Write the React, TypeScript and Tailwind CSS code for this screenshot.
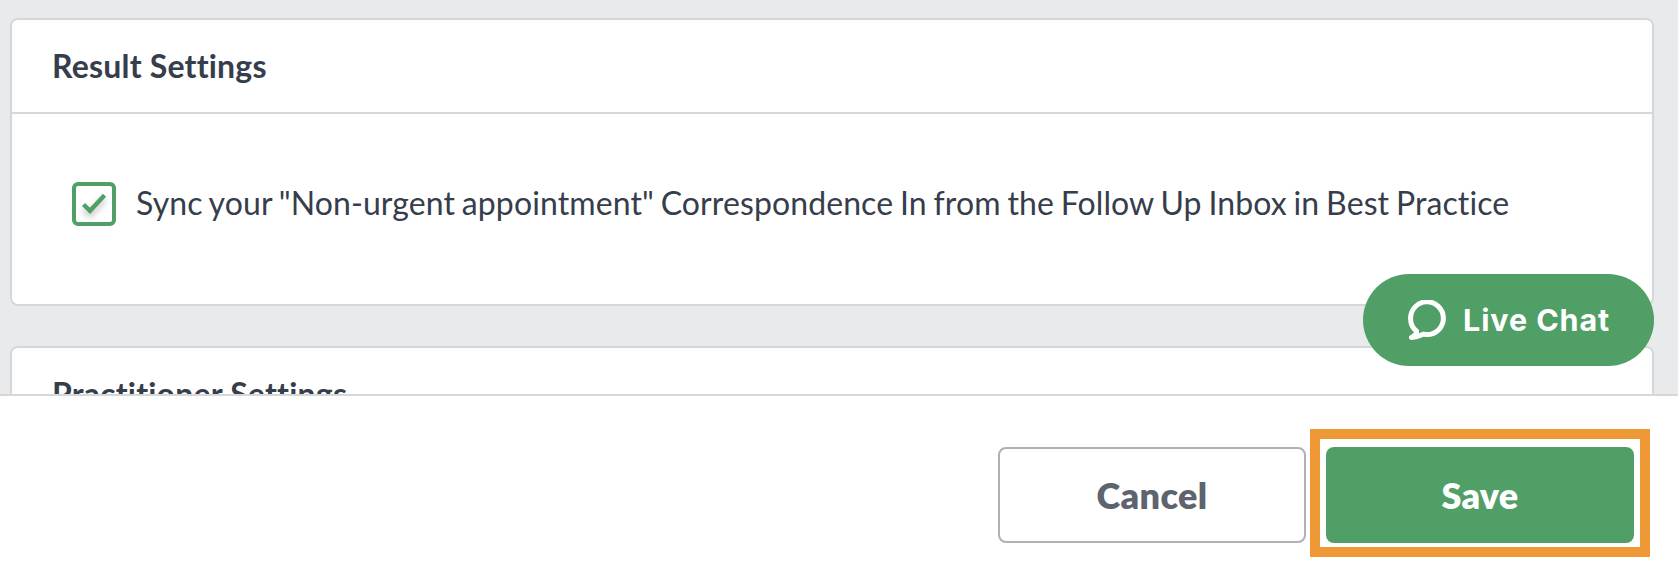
import React from "react";

function CheckIcon() {
  return (
    <svg width="36" height="36" viewBox="0 0 36 36" className="overflow-visible" fill="none">
      <path
        d="M7.5 18.5L14 24.8L28.5 9.3"
        stroke="#4f9f66"
        strokeWidth="4.4"
        className="drop-shadow-[0_4px_3px_rgba(0,0,0,0.25)]"
      />
    </svg>
  );
}

function ChatIcon() {
  return (
    <svg width="38" height="40" viewBox="0 0 38 40" fill="none" className="shrink-0">
      <path
        d="M8.6 31.2C4.9 28.2 2.6 23.9 2.6 19A16.4 16.4 0 1 1 19 34.6C17.8 34.6 16.9 34.4 15.7 34.1C12 35.8 8 37.6 3.4 37.4C6.4 36 8.6 34 8.6 31.2Z"
        stroke="#fff"
        strokeWidth="5"
        strokeLinejoin="round"
      />
    </svg>
  );
}

function CardHeader({ title }: { title: string }) {
  return (
    <div className="flex h-[94px] items-center border-b-2 border-[#d6d7d9] pl-10 text-[32px] font-bold tracking-[0.2px]">
      <h2>{title}</h2>
    </div>
  );
}

export default function App() {
  return (
    <div className="relative flex h-[564px] w-[1678px] flex-col overflow-hidden bg-[#e9eaec] font-[Lato,sans-serif] text-[#363d4b]">
      <main className="flex h-[394px] shrink-0 flex-col gap-10 overflow-hidden pt-[18px] pr-6 pl-[10px]">
        <section className="h-[288px] shrink-0 rounded-lg border-2 border-[#d6d7d9] bg-white">
          <CardHeader title="Result Settings" />
          <label className="flex items-center gap-5 pt-[68px] pl-[60px]">
            <span className="flex size-11 items-center justify-center rounded-md border-4 border-[#4f9f66]">
              <CheckIcon />
            </span>
            <span className="-mt-0.5 text-[32px] leading-[44px] tracking-[0.1px] [word-spacing:-1.5px] whitespace-nowrap">
              Sync your "Non-urgent appointment" Correspondence In from the Follow Up Inbox in Best Practice
            </span>
          </label>
        </section>
        <section className="h-[288px] shrink-0 rounded-lg border-2 border-[#d6d7d9] bg-white">
          <CardHeader title="Practitioner Settings" />
        </section>
      </main>
      <footer className="flex h-[170px] items-start justify-end border-t-2 border-[#d6d7d9] bg-white pt-[33px] pr-7">
        <button className="mt-[18px] mr-1 h-24 w-[308px] rounded-lg border-2 border-[#afb0b8] text-[36px] font-extrabold tracking-[0.4px] text-[#5d636f]">
          Cancel
        </button>
        <div className="h-[128px] w-[340px] border-10 border-[#ef9836] px-1.5 py-2">
          <button className="h-24 w-[308px] rounded-lg bg-[#4f9f66] text-[36px] font-extrabold tracking-[0.2px] text-white">
            Save
          </button>
        </div>
      </footer>
      <button className="absolute top-[274px] left-[1363px] flex h-[92px] w-[291px] items-center rounded-full bg-[#4f9f66] pl-[45px] text-white">
        <ChatIcon />
        <span className="ml-[17px] font-[Inter,sans-serif] text-[30.5px] font-bold tracking-[0.9px] whitespace-nowrap">
          Live Chat
        </span>
      </button>
    </div>
  );
}
